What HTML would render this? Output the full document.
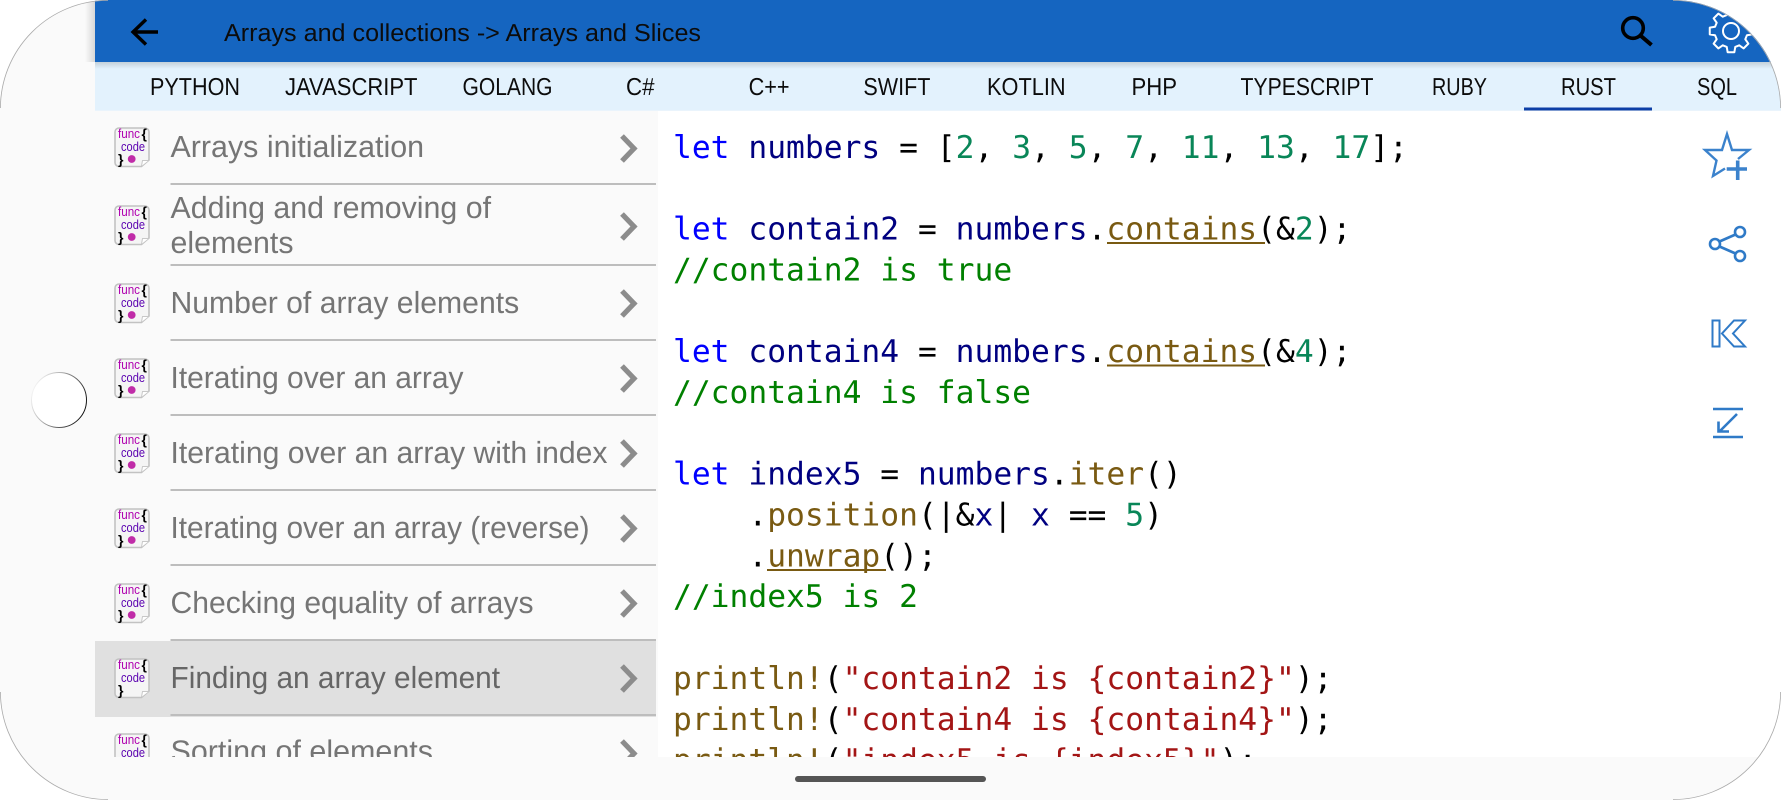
<!DOCTYPE html>
<html>
<head>
<meta charset="utf-8">
<style>
html,body{margin:0;padding:0;background:#fff;width:1781px;height:800px;overflow:hidden}
svg{display:block}
.s{font-family:"Liberation Sans",sans-serif;text-rendering:geometricPrecision}
.m{font-family:"DejaVu Sans Mono","Liberation Mono",monospace;font-size:31.3px;text-rendering:geometricPrecision;white-space:pre}
.t{font-size:24.5px;fill:#0c0c0c}
.r{font-size:30.5px;fill:#757575}
.k{fill:#0000ff}.n{fill:#000080}.d{fill:#098658}.c{fill:#008000}.f{fill:#795a12}.q{fill:#a31515}.p{fill:#000}
.ic{font-family:"Liberation Sans",sans-serif;font-size:12.5px}
.b{font-size:14px;font-weight:bold}
</style>
</head>
<body>
<svg width="1781" height="800" viewBox="0 0 1781 800" xmlns="http://www.w3.org/2000/svg">
<defs>
<clipPath id="phone"><rect x="0" y="0" width="1781" height="800" rx="108" ry="108"/></clipPath>
<clipPath id="content"><rect x="0" y="0" width="1781" height="757"/></clipPath>
<linearGradient id="sh" x1="0" y1="0" x2="0" y2="1"><stop offset="0" stop-color="#000" stop-opacity=".14"/><stop offset="1" stop-color="#000" stop-opacity="0"/></linearGradient>
<linearGradient id="shl" x1="1" y1="0" x2="0" y2="0"><stop offset="0" stop-color="#000" stop-opacity=".14"/><stop offset="1" stop-color="#000" stop-opacity="0"/></linearGradient>
<linearGradient id="hole" x1="0" y1="0.2" x2="1" y2="0.6"><stop offset="0" stop-color="#fff"/><stop offset=".35" stop-color="#bbb"/><stop offset="1" stop-color="#111"/></linearGradient>
</defs>

<g clip-path="url(#phone)">
<rect width="1781" height="800" fill="#fafafa"/>
<rect x="658" y="111" width="1123" height="646" fill="#fff"/>
<rect x="85" y="0" width="10" height="62" fill="url(#shl)"/>
<rect x="95" y="0" width="1686" height="62" fill="#1565c0"/>
<rect x="95" y="62" width="1686" height="48.7" fill="#e3f2fd"/>
<rect x="95" y="62" width="1686" height="7" fill="url(#sh)"/>

<!-- back arrow -->
<path d="M158 32H134M146 19.5L133 32L146 44.5" fill="none" stroke="#000" stroke-width="3.4"/>
<text class="s t" x="224" y="41" textLength="477" lengthAdjust="spacingAndGlyphs">Arrays and collections -&gt; Arrays and Slices</text>

<!-- search -->
<circle cx="1633" cy="28" r="10.3" fill="none" stroke="#000" stroke-width="3.6"/>
<path d="M1641 36L1651.5 45" stroke="#000" stroke-width="4" fill="none"/>

<!-- gear -->
<g transform="translate(1731,31)" fill="none" stroke="#fff" stroke-width="2" stroke-linejoin="round">
<circle r="8"/>
<path d="M15.94 -4.27L21.24 -3.36L21.24 3.36L15.94 4.27L14.29 8.25L17.39 12.64L12.64 17.39L8.25 14.29L4.27 15.94L3.36 21.24L-3.36 21.24L-4.27 15.94L-8.25 14.29L-12.64 17.39L-17.39 12.64L-14.29 8.25L-15.94 4.27L-21.24 3.36L-21.24 -3.36L-15.94 -4.27L-14.29 -8.25L-17.39 -12.64L-12.64 -17.39L-8.25 -14.29L-4.27 -15.94L-3.36 -21.24L3.36 -21.24L4.27 -15.94L8.25 -14.29L12.64 -17.39L17.39 -12.64L14.29 -8.25Z"/>
</g>

<!-- tabs -->
<text class="s t" x="150" y="95" textLength="90" lengthAdjust="spacingAndGlyphs">PYTHON</text>
<text class="s t" x="285" y="95" textLength="132.5" lengthAdjust="spacingAndGlyphs">JAVASCRIPT</text>
<text class="s t" x="462.5" y="95" textLength="90" lengthAdjust="spacingAndGlyphs">GOLANG</text>
<text class="s t" x="626" y="95" textLength="28.5" lengthAdjust="spacingAndGlyphs">C#</text>
<text class="s t" x="748.6" y="95" textLength="41" lengthAdjust="spacingAndGlyphs">C++</text>
<text class="s t" x="863.4" y="95" textLength="67" lengthAdjust="spacingAndGlyphs">SWIFT</text>
<text class="s t" x="987" y="95" textLength="78.6" lengthAdjust="spacingAndGlyphs">KOTLIN</text>
<text class="s t" x="1131.5" y="95" textLength="45.5" lengthAdjust="spacingAndGlyphs">PHP</text>
<text class="s t" x="1240.5" y="95" textLength="133" lengthAdjust="spacingAndGlyphs">TYPESCRIPT</text>
<text class="s t" x="1432" y="95" textLength="55" lengthAdjust="spacingAndGlyphs">RUBY</text>
<text class="s t" x="1561" y="95" textLength="55" lengthAdjust="spacingAndGlyphs">RUST</text>
<text class="s t" x="1697" y="95" textLength="40" lengthAdjust="spacingAndGlyphs">SQL</text>
<rect x="1524" y="107.5" width="128" height="3" fill="#0d3fa6"/>

<g clip-path="url(#content)">
<!-- selected row -->
<rect x="95" y="641" width="561" height="76" fill="#e0e0e0"/>

<!-- separators -->
<g fill="#bdbdbd">
<rect x="170.5" y="183" width="485.5" height="2"/>
<rect x="170.5" y="264" width="485.5" height="2"/>
<rect x="170.5" y="339" width="485.5" height="2"/>
<rect x="170.5" y="414" width="485.5" height="2"/>
<rect x="170.5" y="489" width="485.5" height="2"/>
<rect x="170.5" y="564" width="485.5" height="2"/>
<rect x="170.5" y="639" width="485.5" height="2"/>
<rect x="170.5" y="714" width="485.5" height="2"/>
</g>

<!-- row text -->
<text class="s r" x="170.5" y="157" textLength="253.6" lengthAdjust="spacingAndGlyphs">Arrays initialization</text>
<text class="s r" x="170.5" y="218" textLength="320.5" lengthAdjust="spacingAndGlyphs">Adding and removing of</text>
<text class="s r" x="170.5" y="253" textLength="123" lengthAdjust="spacingAndGlyphs">elements</text>
<text class="s r" x="170.5" y="313" textLength="348.7" lengthAdjust="spacingAndGlyphs">Number of array elements</text>
<text class="s r" x="170.5" y="388" textLength="293" lengthAdjust="spacingAndGlyphs">Iterating over an array</text>
<text class="s r" x="170.5" y="463" textLength="437" lengthAdjust="spacingAndGlyphs">Iterating over an array with index</text>
<text class="s r" x="170.5" y="538" textLength="419" lengthAdjust="spacingAndGlyphs">Iterating over an array (reverse)</text>
<text class="s r" x="170.5" y="613" textLength="363" lengthAdjust="spacingAndGlyphs">Checking equality of arrays</text>
<text class="s r" x="170.5" y="688" textLength="329.5" lengthAdjust="spacingAndGlyphs" style="fill:#666">Finding an array element</text>
<text class="s r" x="170.5" y="761.5" textLength="262.5" lengthAdjust="spacingAndGlyphs">Sorting of elements</text>

<!-- chevrons -->
<g fill="none" stroke="#8c8c8c" stroke-width="5.2">
<path d="M622 136L634 148.5L622 161"/>
<path d="M622 214L634 226.5L622 239"/>
<path d="M622 291L634 303.5L622 316"/>
<path d="M622 366L634 378.5L622 391"/>
<path d="M622 441L634 453.5L622 466"/>
<path d="M622 516L634 528.5L622 541"/>
<path d="M622 591L634 603.5L622 616"/>
<path d="M622 666L634 678.5L622 691"/>
<path d="M622 741L634 753.5L622 766"/>
</g>

<!-- doc icons -->
<g transform="translate(0,0)"><path d="M119 128H145a4 4 0 0 1 4 4V160L141.5 166.5H119a4 4 0 0 1 -4 -4V132a4 4 0 0 1 4 -4Z" fill="#f5f5f5" stroke="#c2c2c2" stroke-width="1.6"/><path d="M148.5 160.500H142.500L141.500 166" fill="#fff" stroke="#c8c8c8"/><text class="ic" x="118" y="138" fill="#b000b0" textLength="22" lengthAdjust="spacingAndGlyphs">func</text><text class="ic b" x="141.500" y="138.500" fill="#000">{</text><text class="ic" x="121" y="151" fill="#5a00b0" textLength="24" lengthAdjust="spacingAndGlyphs">code</text><text class="ic b" x="118" y="164" fill="#000">}</text><circle cx="131.700" cy="159" r="3.900" fill="#c02ca8"/></g>
<g transform="translate(0,78)"><path d="M119 128H145a4 4 0 0 1 4 4V160L141.5 166.5H119a4 4 0 0 1 -4 -4V132a4 4 0 0 1 4 -4Z" fill="#f5f5f5" stroke="#c2c2c2" stroke-width="1.6"/><path d="M148.5 160.500H142.500L141.500 166" fill="#fff" stroke="#c8c8c8"/><text class="ic" x="118" y="138" fill="#b000b0" textLength="22" lengthAdjust="spacingAndGlyphs">func</text><text class="ic b" x="141.500" y="138.500" fill="#000">{</text><text class="ic" x="121" y="151" fill="#5a00b0" textLength="24" lengthAdjust="spacingAndGlyphs">code</text><text class="ic b" x="118" y="164" fill="#000">}</text><circle cx="131.700" cy="159" r="3.900" fill="#c02ca8"/></g>
<g transform="translate(0,156)"><path d="M119 128H145a4 4 0 0 1 4 4V160L141.5 166.5H119a4 4 0 0 1 -4 -4V132a4 4 0 0 1 4 -4Z" fill="#f5f5f5" stroke="#c2c2c2" stroke-width="1.6"/><path d="M148.5 160.500H142.500L141.500 166" fill="#fff" stroke="#c8c8c8"/><text class="ic" x="118" y="138" fill="#b000b0" textLength="22" lengthAdjust="spacingAndGlyphs">func</text><text class="ic b" x="141.500" y="138.500" fill="#000">{</text><text class="ic" x="121" y="151" fill="#5a00b0" textLength="24" lengthAdjust="spacingAndGlyphs">code</text><text class="ic b" x="118" y="164" fill="#000">}</text><circle cx="131.700" cy="159" r="3.900" fill="#c02ca8"/></g>
<g transform="translate(0,231)"><path d="M119 128H145a4 4 0 0 1 4 4V160L141.5 166.5H119a4 4 0 0 1 -4 -4V132a4 4 0 0 1 4 -4Z" fill="#f5f5f5" stroke="#c2c2c2" stroke-width="1.6"/><path d="M148.5 160.500H142.500L141.500 166" fill="#fff" stroke="#c8c8c8"/><text class="ic" x="118" y="138" fill="#b000b0" textLength="22" lengthAdjust="spacingAndGlyphs">func</text><text class="ic b" x="141.500" y="138.500" fill="#000">{</text><text class="ic" x="121" y="151" fill="#5a00b0" textLength="24" lengthAdjust="spacingAndGlyphs">code</text><text class="ic b" x="118" y="164" fill="#000">}</text><circle cx="131.700" cy="159" r="3.900" fill="#c02ca8"/></g>
<g transform="translate(0,306)"><path d="M119 128H145a4 4 0 0 1 4 4V160L141.5 166.5H119a4 4 0 0 1 -4 -4V132a4 4 0 0 1 4 -4Z" fill="#f5f5f5" stroke="#c2c2c2" stroke-width="1.6"/><path d="M148.5 160.500H142.500L141.500 166" fill="#fff" stroke="#c8c8c8"/><text class="ic" x="118" y="138" fill="#b000b0" textLength="22" lengthAdjust="spacingAndGlyphs">func</text><text class="ic b" x="141.500" y="138.500" fill="#000">{</text><text class="ic" x="121" y="151" fill="#5a00b0" textLength="24" lengthAdjust="spacingAndGlyphs">code</text><text class="ic b" x="118" y="164" fill="#000">}</text><circle cx="131.700" cy="159" r="3.900" fill="#c02ca8"/></g>
<g transform="translate(0,381)"><path d="M119 128H145a4 4 0 0 1 4 4V160L141.5 166.5H119a4 4 0 0 1 -4 -4V132a4 4 0 0 1 4 -4Z" fill="#f5f5f5" stroke="#c2c2c2" stroke-width="1.6"/><path d="M148.5 160.500H142.500L141.500 166" fill="#fff" stroke="#c8c8c8"/><text class="ic" x="118" y="138" fill="#b000b0" textLength="22" lengthAdjust="spacingAndGlyphs">func</text><text class="ic b" x="141.500" y="138.500" fill="#000">{</text><text class="ic" x="121" y="151" fill="#5a00b0" textLength="24" lengthAdjust="spacingAndGlyphs">code</text><text class="ic b" x="118" y="164" fill="#000">}</text><circle cx="131.700" cy="159" r="3.900" fill="#c02ca8"/></g>
<g transform="translate(0,456)"><path d="M119 128H145a4 4 0 0 1 4 4V160L141.5 166.5H119a4 4 0 0 1 -4 -4V132a4 4 0 0 1 4 -4Z" fill="#f5f5f5" stroke="#c2c2c2" stroke-width="1.6"/><path d="M148.5 160.500H142.500L141.500 166" fill="#fff" stroke="#c8c8c8"/><text class="ic" x="118" y="138" fill="#b000b0" textLength="22" lengthAdjust="spacingAndGlyphs">func</text><text class="ic b" x="141.500" y="138.500" fill="#000">{</text><text class="ic" x="121" y="151" fill="#5a00b0" textLength="24" lengthAdjust="spacingAndGlyphs">code</text><text class="ic b" x="118" y="164" fill="#000">}</text><circle cx="131.700" cy="159" r="3.900" fill="#c02ca8"/></g>
<g transform="translate(0,531)"><path d="M119 128H145a4 4 0 0 1 4 4V160L141.5 166.5H119a4 4 0 0 1 -4 -4V132a4 4 0 0 1 4 -4Z" fill="#f5f5f5" stroke="#c2c2c2" stroke-width="1.6"/><path d="M148.5 160.500H142.500L141.500 166" fill="#fff" stroke="#c8c8c8"/><text class="ic" x="118" y="138" fill="#b000b0" textLength="22" lengthAdjust="spacingAndGlyphs">func</text><text class="ic b" x="141.500" y="138.500" fill="#000">{</text><text class="ic" x="121" y="151" fill="#5a00b0" textLength="24" lengthAdjust="spacingAndGlyphs">code</text><text class="ic b" x="118" y="164" fill="#000">}</text></g>
<g transform="translate(0,606)"><path d="M119 128H145a4 4 0 0 1 4 4V160L141.5 166.5H119a4 4 0 0 1 -4 -4V132a4 4 0 0 1 4 -4Z" fill="#f5f5f5" stroke="#c2c2c2" stroke-width="1.6"/><path d="M148.5 160.500H142.500L141.500 166" fill="#fff" stroke="#c8c8c8"/><text class="ic" x="118" y="138" fill="#b000b0" textLength="22" lengthAdjust="spacingAndGlyphs">func</text><text class="ic b" x="141.500" y="138.500" fill="#000">{</text><text class="ic" x="121" y="151" fill="#5a00b0" textLength="24" lengthAdjust="spacingAndGlyphs">code</text><text class="ic b" x="118" y="164" fill="#000">}</text><circle cx="131.700" cy="159" r="3.900" fill="#c02ca8"/></g>

<!-- code -->
<text class="m" x="673" y="158" xml:space="preserve"><tspan class="k">let</tspan> <tspan class="n">numbers</tspan> = [<tspan class="d">2</tspan>, <tspan class="d">3</tspan>, <tspan class="d">5</tspan>, <tspan class="d">7</tspan>, <tspan class="d">11</tspan>, <tspan class="d">13</tspan>, <tspan class="d">17</tspan>];</text>
<text class="m" x="673" y="239.5" xml:space="preserve"><tspan class="k">let</tspan> <tspan class="n">contain2</tspan> = <tspan class="n">numbers</tspan>.<tspan class="f">contains</tspan>(&amp;<tspan class="d">2</tspan>);</text>
<text class="m c" x="673" y="280.4" xml:space="preserve">//contain2 is true</text>
<text class="m" x="673" y="362" xml:space="preserve"><tspan class="k">let</tspan> <tspan class="n">contain4</tspan> = <tspan class="n">numbers</tspan>.<tspan class="f">contains</tspan>(&amp;<tspan class="d">4</tspan>);</text>
<text class="m c" x="673" y="403" xml:space="preserve">//contain4 is false</text>
<text class="m" x="673" y="484.5" xml:space="preserve"><tspan class="k">let</tspan> <tspan class="n">index5</tspan> = <tspan class="n">numbers</tspan>.<tspan class="f">iter</tspan>()</text>
<text class="m" x="673" y="525.5" xml:space="preserve">    .<tspan class="f">position</tspan>(|&amp;<tspan class="n">x</tspan>| <tspan class="n">x</tspan> == <tspan class="d">5</tspan>)</text>
<text class="m" x="673" y="566.5" xml:space="preserve">    .<tspan class="f">unwrap</tspan>();</text>
<text class="m c" x="673" y="607" xml:space="preserve">//index5 is 2</text>
<text class="m" x="673" y="689" xml:space="preserve"><tspan class="f">println!</tspan>(<tspan class="q">"contain2 is {contain2}"</tspan>);</text>
<text class="m" x="673" y="730" xml:space="preserve"><tspan class="f">println!</tspan>(<tspan class="q">"contain4 is {contain4}"</tspan>);</text>
<text class="m" x="673" y="771" xml:space="preserve"><tspan class="f">println!</tspan>(<tspan class="q">"index5 is {index5}"</tspan>);</text>
<rect x="1107" y="242" width="158" height="2" fill="#795a12"/>
<rect x="1107" y="364.5" width="158" height="2" fill="#795a12"/>
<rect x="767" y="569" width="119" height="2" fill="#795a12"/>
</g>

<!-- right side icons -->
<g fill="none" stroke="#3b82cc" stroke-width="2.4" stroke-linejoin="miter">
<path d="M1738 159L1749 150H1732L1727 134L1722 150H1705L1716.500 160.500L1713 176L1725 168.500"/>
<path d="M1737.700 160.500V180M1726.700 169H1747" stroke-width="3.600"/>
</g>
<g fill="none" stroke="#2f7ac7" stroke-width="2.6">
<circle cx="1715" cy="244" r="5"/><circle cx="1740" cy="232" r="5"/><circle cx="1740" cy="256" r="5"/>
<path d="M1719.5 241.5L1735.5 234.5M1719.5 246.5L1735.5 253.5"/>
</g>
<g fill="none" stroke="#2f7ac7" stroke-width="2">
<rect x="1712.5" y="320.5" width="7" height="26"/>
<path d="M1745 320.5H1734L1722 333.5L1734 346.5H1745L1733 333.5Z"/>
</g>
<g fill="none" stroke="#2f7ac7" stroke-width="2.6">
<path d="M1713 409H1743M1713 437H1743"/>
<path d="M1737 414L1720 431M1718.5 421.5V431.5H1729"/>
</g>

<!-- hole -->
<circle cx="59" cy="400" r="27.5" fill="#fff" stroke="url(#hole)" stroke-width="1"/>

<!-- home indicator -->
<rect x="795" y="776" width="191" height="6" rx="3" fill="#555"/>
</g>

<!-- device corner outlines -->
<g fill="none" stroke="#aaa" stroke-width=".8">
<path d="M.4 108A108 108 0 0 1 108 .4"/>
<path d="M1673 .4A108 108 0 0 1 1780.600 108"/>
<path d="M1780.600 692A108 108 0 0 1 1673 799.600"/>
<path d="M108 799.600A108 108 0 0 1 .4 692"/>
</g>
</svg>
</body>
</html>
